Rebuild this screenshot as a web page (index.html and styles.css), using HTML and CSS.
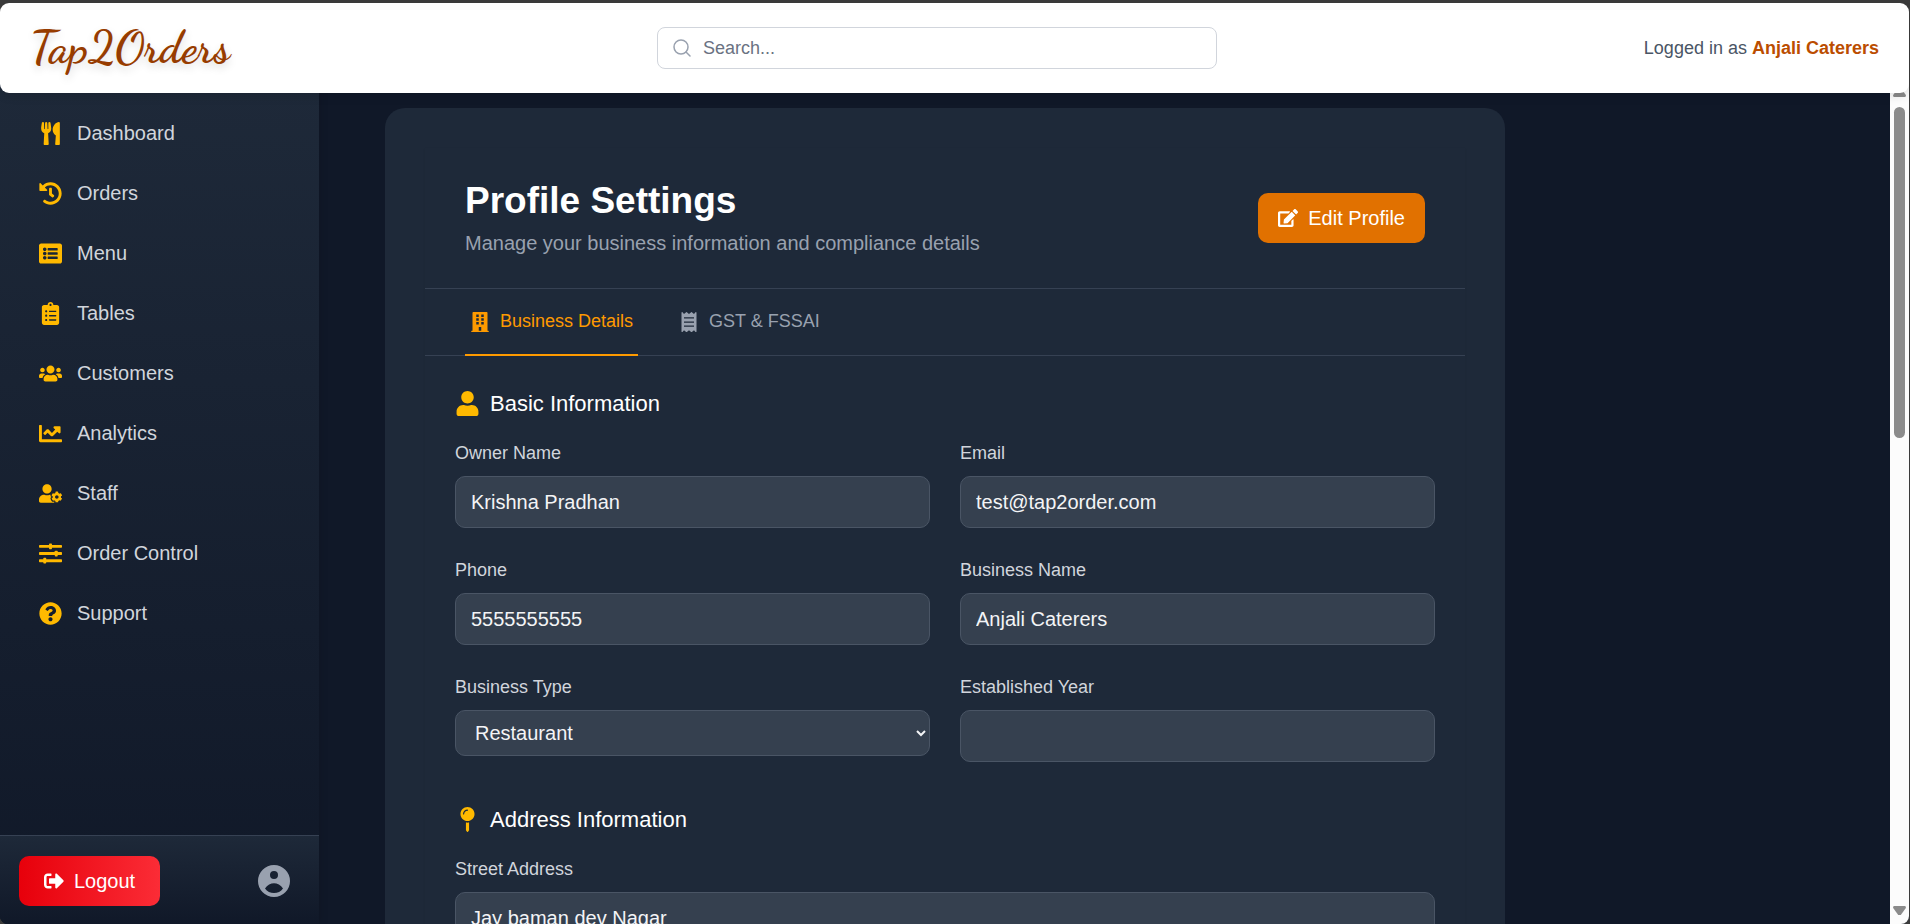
FILE: index.html
```html
<!DOCTYPE html>
<html lang="en">
<head>
    <meta charset="UTF-8">
    <meta name="viewport" content="width=device-width, initial-scale=1.0">
    <title>Tap2Orders - Profile Settings</title>
    <link rel="stylesheet" href="styles.css">
</head>
<body>
    <div class="app">
        <header class="topbar">
            <a href="#" class="logo">Tap2Orders</a>
            <label class="search">
                <svg class="search-icon" viewBox="0 0 18 18"><circle cx="8" cy="8" r="7"/><path d="M13 13l4 4"/></svg>
                <input type="search" placeholder="Search..." aria-label="Search">
            </label>
            <div class="logged-in">Logged in as <strong>Anjali Caterers</strong></div>
        </header>

        <div class="shell">
            <aside class="sidebar">
                <nav class="nav">
                    <a href="#" class="nav-item">
                        <svg class="nav-icon" viewBox="0 0 416 512"><path d="M207.9 15.2c.8 4.7 16.1 94.5 16.1 128.8 0 52.3-27.8 89.6-68.9 104.6L168 486.7c.7 13.7-10.2 25.3-24 25.3H80c-13.7 0-24.7-11.5-24-25.3l12.9-238.1C27.7 233.6 0 196.2 0 144 0 109.6 15.3 19.9 16.1 15.2 19.3-5.1 61.4-5.4 64 16.3v141.2c1.3 3.4 15.1 3.2 16 0 1.4-25.3 7.9-139.2 8-141.8 3.3-20.8 44.7-20.8 47.9 0 .2 2.7 6.6 116.5 8 141.8.9 3.2 14.8 3.4 16 0V16.3c2.6-21.6 44.8-21.4 48-1.1zm119.2 285.7l-15 185.1c-1.2 14 9.9 26 23.9 26h56c13.3 0 24-10.7 24-24V24c0-13.2-10.7-24-24-24-82.5 0-221.4 178.5-64.9 300.9z"/></svg>
                        Dashboard
                    </a>
                    <a href="#" class="nav-item">
                        <svg class="nav-icon" viewBox="0 0 512 512"><path d="M504 255.531c.253 136.64-111.18 248.372-247.82 248.468-59.015.042-113.223-20.53-155.822-54.911-11.077-8.94-11.905-25.541-1.839-35.607l11.267-11.267c8.609-8.609 22.353-9.551 31.891-1.984C173.062 425.135 212.781 440 256 440c101.705 0 184-82.311 184-184 0-101.705-82.311-184-184-184-48.814 0-93.149 18.969-126.068 49.932l50.754 50.754c10.08 10.08 2.941 27.314-11.313 27.314H24c-8.837 0-16-7.163-16-16V38.627c0-14.254 17.234-21.393 27.314-11.314l49.372 49.372C129.209 34.136 189.552 8 256 8c136.81 0 247.747 110.78 248 247.531zm-180.912 78.784l9.823-12.63c8.138-10.463 6.253-25.542-4.21-33.679L288 256.349V152c0-13.255-10.745-24-24-24h-16c-13.255 0-24 10.745-24 24v135.651l65.409 50.874c10.463 8.137 25.541 6.253 33.679-4.21z"/></svg>
                        Orders
                    </a>
                    <a href="#" class="nav-item">
                        <svg class="nav-icon" viewBox="0 0 512 512"><path fill-rule="evenodd" d="M464 480H48c-26.51 0-48-21.49-48-48V80c0-26.51 21.49-48 48-48h416c26.51 0 48 21.49 48 48v352c0 26.51-21.49 48-48 48zM128 120c-22.091 0-40 17.909-40 40s17.909 40 40 40 40-17.909 40-40-17.909-40-40-40zm0 96c-22.091 0-40 17.909-40 40s17.909 40 40 40 40-17.909 40-40-17.909-40-40-40zm0 96c-22.091 0-40 17.909-40 40s17.909 40 40 40 40-17.909 40-40-17.909-40-40-40zm288-136v-32c0-6.627-5.373-12-12-12H204c-6.627 0-12 5.373-12 12v32c0 6.627 5.373 12 12 12h200c6.627 0 12-5.373 12-12zm0 96v-32c0-6.627-5.373-12-12-12H204c-6.627 0-12 5.373-12 12v32c0 6.627 5.373 12 12 12h200c6.627 0 12-5.373 12-12zm0 96v-32c0-6.627-5.373-12-12-12H204c-6.627 0-12 5.373-12 12v32c0 6.627 5.373 12 12 12h200c6.627 0 12-5.373 12-12z"/></svg>
                        Menu
                    </a>
                    <a href="#" class="nav-item">
                        <svg class="nav-icon" viewBox="0 0 384 512"><path fill-rule="evenodd" d="M336 64h-80c0-35.3-28.7-64-64-64s-64 28.7-64 64H48C21.5 64 0 85.5 0 112v352c0 26.5 21.5 48 48 48h288c26.5 0 48-21.5 48-48V112c0-26.5-21.5-48-48-48zM96 424c-13.3 0-24-10.7-24-24s10.7-24 24-24 24 10.7 24 24-10.7 24-24 24zm0-96c-13.3 0-24-10.7-24-24s10.7-24 24-24 24 10.7 24 24-10.7 24-24 24zm0-96c-13.3 0-24-10.7-24-24s10.7-24 24-24 24 10.7 24 24-10.7 24-24 24zm96-192c13.3 0 24 10.7 24 24s-10.7 24-24 24-24-10.7-24-24 10.7-24 24-24zm128 368c0 4.4-3.6 8-8 8H168c-4.4 0-8-3.6-8-8v-16c0-4.4 3.6-8 8-8h144c4.4 0 8 3.6 8 8v16zm0-96c0 4.4-3.6 8-8 8H168c-4.4 0-8-3.6-8-8v-16c0-4.4 3.6-8 8-8h144c4.4 0 8 3.6 8 8v16zm0-96c0 4.4-3.6 8-8 8H168c-4.4 0-8-3.6-8-8v-16c0-4.4 3.6-8 8-8h144c4.4 0 8 3.6 8 8v16z"/></svg>
                        Tables
                    </a>
                    <a href="#" class="nav-item">
                        <svg class="nav-icon" viewBox="0 0 640 512"><path d="M96 224c35.3 0 64-28.7 64-64s-28.7-64-64-64-64 28.7-64 64 28.7 64 64 64zm448 0c35.3 0 64-28.7 64-64s-28.7-64-64-64-64 28.7-64 64 28.7 64 64 64zm32 32h-64c-17.6 0-33.5 7.1-45.1 18.6 40.3 22.1 68.9 62 75.1 109.4h66c17.7 0 32-14.3 32-32v-32c0-35.3-28.7-64-64-64zm-256 0c61.9 0 112-50.1 112-112S381.9 32 320 32 208 82.1 208 144s50.1 112 112 112zm76.8 32h-8.3c-20.8 10-43.9 16-68.5 16s-47.6-6-68.5-16h-8.3C179.6 288 128 339.6 128 403.2V432c0 26.5 21.5 48 48 48h288c26.5 0 48-21.5 48-48v-28.8c0-63.6-51.6-115.2-115.2-115.2zm-223.7-13.4C161.5 263.1 145.6 256 128 256H64c-35.3 0-64 28.7-64 64v32c0 17.7 14.3 32 32 32h65.9c6.3-47.4 34.9-87.3 75.2-109.4z"/></svg>
                        Customers
                    </a>
                    <a href="#" class="nav-item">
                        <svg class="nav-icon" viewBox="0 0 512 512"><path d="M496 384H64V80c0-8.84-7.16-16-16-16H16C7.16 64 0 71.16 0 80v336c0 17.67 14.33 32 32 32h464c8.84 0 16-7.16 16-16v-32c0-8.84-7.16-16-16-16zM464 96H345.94c-21.38 0-32.09 25.85-16.97 40.97l32.4 32.4L288 242.75l-73.37-73.37c-12.5-12.5-32.76-12.5-45.25 0l-68.69 68.69c-6.25 6.25-6.25 16.38 0 22.63l22.62 22.62c6.25 6.25 16.38 6.25 22.63 0L192 237.25l73.37 73.37c12.5 12.5 32.76 12.5 45.25 0l96-96 32.4 32.4c15.12 15.12 40.97 4.41 40.97-16.97V112c.01-8.84-7.15-16-15.99-16z"/></svg>
                        Analytics
                    </a>
                    <a href="#" class="nav-item">
                        <svg class="nav-icon" viewBox="0 0 640 512"><path d="M610.5 373.3c2.6-14.1 2.6-28.5 0-42.6l25.8-14.9c3-1.7 4.3-5.2 3.3-8.5-6.7-21.6-18.2-41.2-33.2-57.4-2.3-2.5-6-3.1-9-1.4l-25.8 14.9c-10.9-9.3-23.4-16.5-36.9-21.3v-29.8c0-3.4-2.4-6.4-5.7-7.1-22.3-5-45-4.8-66.2 0-3.3.7-5.7 3.7-5.7 7.1v29.8c-13.5 4.8-26 12-36.9 21.3l-25.8-14.9c-2.9-1.7-6.7-1.1-9 1.4-15 16.2-26.5 35.8-33.2 57.4-1 3.3.4 6.8 3.3 8.5l25.8 14.9c-2.6 14.1-2.6 28.5 0 42.6l-25.8 14.9c-3 1.7-4.3 5.2-3.3 8.5 6.7 21.6 18.2 41.1 33.2 57.4 2.3 2.5 6 3.1 9 1.4l25.8-14.9c10.9 9.3 23.4 16.5 36.9 21.3v29.8c0 3.4 2.4 6.4 5.7 7.1 22.3 5 45 4.8 66.2 0 3.3-.7 5.7-3.7 5.7-7.1v-29.8c13.5-4.8 26-12 36.9-21.3l25.8 14.9c2.9 1.7 6.7 1.1 9-1.4 15-16.2 26.5-35.8 33.2-57.4 1-3.3-.4-6.8-3.3-8.5l-25.8-14.9zM496 400.5c-26.8 0-48.5-21.8-48.5-48.5s21.8-48.5 48.5-48.5 48.5 21.8 48.5 48.5-21.7 48.5-48.5 48.5zM224 256c70.7 0 128-57.3 128-128S294.7 0 224 0 96 57.3 96 128s57.3 128 128 128zm201.2 226.5c-2.3-1.2-4.6-2.6-6.8-3.9l-7.9 4.6c-6 3.4-12.8 5.3-19.6 5.3-10.9 0-21.4-4.6-28.9-12.6-18.3-19.8-32.3-43.9-40.2-69.6-5.5-17.7 1.9-36.4 17.9-45.7l7.9-4.6c-.1-2.6-.1-5.2 0-7.8l-7.9-4.6c-16-9.2-23.4-28-17.9-45.7.9-2.9 2.2-5.8 3.2-8.7-3.8-.3-7.5-1.2-11.4-1.2h-16.7c-22.2 10.2-46.9 16-72.9 16s-50.6-5.8-72.9-16h-16.7C60.2 288 0 348.2 0 422.4V464c0 26.5 21.5 48 48 48h352c10.1 0 19.5-3.2 27.2-8.5-1.2-3.8-2-7.7-2-11.8v-9.2z"/></svg>
                        Staff
                    </a>
                    <a href="#" class="nav-item">
                        <svg class="nav-icon" viewBox="0 0 512 512">
                            <rect x="0" y="64" width="512" height="64" rx="16"/>
                            <rect x="0" y="224" width="512" height="64" rx="16"/>
                            <rect x="0" y="384" width="512" height="64" rx="16"/>
                            <rect x="224" y="32" width="64" height="128" rx="16"/>
                            <rect x="352" y="192" width="64" height="128" rx="16"/>
                            <rect x="96" y="352" width="64" height="128" rx="16"/>
                        </svg>
                        Order Control
                    </a>
                    <a href="#" class="nav-item">
                        <svg class="nav-icon" viewBox="0 0 512 512"><path fill-rule="evenodd" d="M504 256c0 136.997-111.043 248-248 248S8 392.997 8 256C8 119.083 119.043 8 256 8s248 111.083 248 248zM262.655 90c-54.497 0-89.255 22.957-116.549 63.758-3.536 5.286-2.353 12.415 2.715 16.258l34.699 26.31c5.205 3.947 12.621 3.008 16.665-2.122 17.864-22.658 30.113-35.797 57.303-35.797 20.429 0 45.698 13.148 45.698 32.958 0 14.976-12.363 22.667-32.534 33.976C247.128 238.528 216 254.941 216 296v4c0 6.627 5.373 12 12 12h56c6.627 0 12-5.373 12-12v-1.333c0-28.462 83.186-29.647 83.186-106.667 0-58.002-60.165-102-116.531-102zM256 338c-25.365 0-46 20.635-46 46 0 25.364 20.635 46 46 46s46-20.636 46-46c0-25.365-20.635-46-46-46z"/></svg>
                        Support
                    </a>
                </nav>
                <div class="sidebar-footer">
                    <button type="button" class="btn btn-logout">
                        <svg class="btn-icon" viewBox="0 0 512 512"><path d="M497 273L329 441c-15 15-41 4.5-41-17v-96H152c-13.3 0-24-10.7-24-24v-96c0-13.3 10.7-24 24-24h136V88c0-21.4 25.9-32 41-17l168 168c9.3 9.4 9.3 24.6 0 34zM192 436v-40c0-6.6-5.4-12-12-12H96c-17.7 0-32-14.3-32-32V160c0-17.7 14.3-32 32-32h84c6.6 0 12-5.4 12-12V76c0-6.6-5.4-12-12-12H96c-53 0-96 43-96 96v192c0 53 43 96 96 96h84c6.6 0 12-5.4 12-12z"/></svg>
                        Logout
                    </button>
                    <button type="button" class="avatar" aria-label="Account">
                        <svg viewBox="0 0 32 32"><path fill-rule="evenodd" d="M16 0a16 16 0 1 0 0 32 16 16 0 0 0 0-32zM16 6a4 4 0 1 1 0 8 4 4 0 0 1 0-8zM7 23.500C9 20 13 18.200 16 18.200s7 1.800 9 5.300C23 26.500 19.500 28 16 28s-7-1.500-9-4.500z"/></svg>
                    </button>
                </div>
            </aside>

            <main class="main">
                <div class="card">
                    <div class="panel">
                        <div class="panel-header">
                            <div>
                                <h1>Profile Settings</h1>
                                <p>Manage your business information and compliance details</p>
                            </div>
                            <button type="button" class="btn btn-edit">
                                <svg class="btn-icon" viewBox="0 0 576 512"><path d="M402.6 83.2l90.2 90.2c3.8 3.8 3.8 10 0 13.800L274.400 405.600l-92.800 10.300c-12.400 1.400-22.900-9.100-21.500-21.500l10.300-92.800L388.800 83.200c3.800-3.800 10-3.800 13.800 0zm162-22.900l-48.800-48.800c-15.200-15.200-39.900-15.200-55.200 0l-35.400 35.400c-3.800 3.800-3.800 10 0 13.800l90.200 90.200c3.800 3.800 10 3.800 13.800 0l35.400-35.400c15.200-15.300 15.200-40 0-55.200zM384 346.200V448H64V128h229.800c3.200 0 6.200-1.300 8.500-3.500l40-40c7.600-7.600 2.200-20.500-8.500-20.500H48C21.500 64 0 85.500 0 112v352c0 26.500 21.500 48 48 48h352c26.500 0 48-21.500 48-48V306.200c0-10.700-12.900-16-20.500-8.500l-40 40c-2.200 2.300-3.500 5.300-3.500 8.500z"/></svg>
                                Edit Profile
                            </button>
                        </div>

                        <div class="tabs" role="tablist">
                            <button type="button" class="tab active" role="tab" aria-selected="true">
                                <svg class="tab-icon" viewBox="0 0 448 512"><path fill-rule="evenodd" d="M436 480h-20V24c0-13.300-10.700-24-24-24H56C42.700 0 32 10.700 32 24v456H12c-6.600 0-12 5.400-12 12v20h448v-20c0-6.600-5.400-12-12-12zM128 64h64v64h-64zM256 64h64v64h-64zM128 160h64v64h-64zM256 160h64v64h-64zM128 256h64v64h-64zM256 256h64v64h-64zM192 384h64v96h-64z"/></svg>
                                Business Details
                            </button>
                            <button type="button" class="tab" role="tab" aria-selected="false">
                                <svg class="tab-icon" viewBox="0 0 384 512"><path fill-rule="evenodd" d="M358.400 3.200L320 48 265.600 3.200a15.900 15.900 0 0 0-19.200 0L192 48 137.600 3.200a15.900 15.900 0 0 0-19.200 0L64 48 25.600 3.200C15-4.700 0 2.800 0 16v480c0 13.200 15 20.700 25.600 12.800L64 464l54.400 44.800a15.900 15.900 0 0 0 19.200 0L192 464l54.400 44.800a15.900 15.900 0 0 0 19.200 0L320 464l38.400 44.800c10.500 7.900 25.600.4 25.600-12.800V16c0-13.200-15-20.700-25.600-12.800zM64 136h256v32H64zM64 240h256v32H64zM64 344h256v32H64z"/></svg>
                                GST &amp; FSSAI
                            </button>
                        </div>

                        <form class="sections">
                            <section>
                                <h2>
                                    <svg class="section-icon" viewBox="0 0 448 512"><path d="M224 256c70.700 0 128-57.300 128-128S294.700 0 224 0 96 57.300 96 128s57.300 128 128 128zm89.600 32h-16.700c-22.200 10.200-46.900 16-72.900 16s-50.600-5.800-72.900-16h-16.700C60.200 288 0 348.200 0 422.400V464c0 26.500 21.500 48 48 48h352c26.500 0 48-21.500 48-48v-41.600c0-74.200-60.200-134.400-134.400-134.400z"/></svg>
                                    Basic Information
                                </h2>
                                <div class="fields">
                                    <div class="field">
                                        <label for="owner">Owner Name</label>
                                        <input id="owner" type="text" value="Krishna Pradhan">
                                    </div>
                                    <div class="field">
                                        <label for="email">Email</label>
                                        <input id="email" type="email" value="test@tap2order.com">
                                    </div>
                                    <div class="field">
                                        <label for="phone">Phone</label>
                                        <input id="phone" type="tel" value="5555555555">
                                    </div>
                                    <div class="field">
                                        <label for="business">Business Name</label>
                                        <input id="business" type="text" value="Anjali Caterers">
                                    </div>
                                    <div class="field">
                                        <label for="type">Business Type</label>
                                        <select id="type">
                                            <option>Restaurant</option>
                                        </select>
                                    </div>
                                    <div class="field">
                                        <label for="year">Established Year</label>
                                        <input id="year" type="text">
                                    </div>
                                </div>
                            </section>

                            <section>
                                <h2>
                                    <svg class="section-icon" viewBox="0 0 288 512"><path fill-rule="evenodd" d="M112 316.940v156.690l22.020 33.020c4.750 7.120 15.220 7.120 19.970 0L176 473.630V316.940c-10.390 1.920-21.060 3.060-32 3.060s-21.610-1.140-32-3.060zM144 0C64.470 0 0 64.470 0 144s64.470 144 144 144 144-64.470 144-144S223.530 0 144 0zm0 76c-37.500 0-68 30.500-68 68 0 6.620-5.380 12-12 12s-12-5.380-12-12c0-50.730 41.280-92 92-92 6.620 0 12 5.380 12 12s-5.380 12-12 12z"/></svg>
                                    Address Information
                                </h2>
                                <div class="fields">
                                    <div class="field wide">
                                        <label for="street">Street Address</label>
                                        <input id="street" type="text" value="Jay baman dev Nagar">
                                    </div>
                                </div>
                            </section>
                        </form>
                    </div>
                </div>
            </main>

            <div class="scrollbar" aria-hidden="true">
                <span class="arrow arrow-up"></span>
                <span class="track"><span class="thumb"></span></span>
                <span class="arrow arrow-down"></span>
            </div>
        </div>
    </div>
</body>
</html>
```
FILE: styles.css
```css
* {
    box-sizing: border-box;
}
body {
    margin: 0;
    font-family: Arial, "Liberation Sans", sans-serif;
    font-size: 20px;
    line-height: 30px;
    background: #3b3b3b;
    overflow: hidden;
}
button, input, select {
    font: inherit;
}
h1, h2, p {
    margin: 0;
}
a {
    text-decoration: none;
}
svg {
    display: block;
    flex-shrink: 0;
    fill: currentColor;
}

.app {
    display: flex;
    flex-direction: column;
    height: 100vh;
    padding: 3px 1px 0 0;
}

/* Top bar */
.topbar {
    position: relative;
    z-index: 2;
    display: flex;
    align-items: center;
    justify-content: space-between;
    flex-shrink: 0;
    height: 90px;
    padding: 0 30px;
    background: white;
    border-radius: 9px;
    box-shadow: 0 4px 8px rgba(0, 0, 0, 0.1);
}
.logo {
    font-family: "Dancing Script", "Liberation Serif", cursive;
    font-size: 45px;
    font-weight: bold;
    line-height: 60px;
    color: #973c00;
    text-shadow: 0 4px 8px rgba(0, 0, 0, 0.15);
}
.search {
    display: flex;
    align-items: center;
    gap: 12px;
    width: 560px;
    height: 42px;
    padding: 0 15px;
    border: 1px solid #d1d5dc;
    border-radius: 8px;
}
.search-icon {
    width: 18px;
    fill: none;
    stroke: #99a1af;
    stroke-width: 1.5;
    stroke-linecap: round;
}
.search input {
    flex: 1;
    min-width: 0;
    padding: 0;
    border: none;
    outline: none;
    background: none;
    font-size: 18px;
}
.search input::placeholder {
    color: #6a7282;
}
.logged-in {
    font-size: 18px;
    color: #4a5565;
}
.logged-in strong {
    color: #bb4d00;
}

/* The body slides under the rounded corners of the top bar */
.shell {
    display: flex;
    flex: 1;
    min-height: 0;
    margin-top: -10px;
    background: #101828;
    border-radius: 0 0 8px 8px;
    overflow: hidden;
}

/* Sidebar */
.sidebar {
    display: flex;
    flex-direction: column;
    flex-shrink: 0;
    width: 319px;
    background: linear-gradient(#1e2939, #101828);
    box-shadow: 2px 0 8px rgba(0, 0, 0, 0.1);
}
.nav {
    display: flex;
    flex-direction: column;
    flex: 1;
    gap: 10px;
    padding: 25px 19px;
}
.nav-item {
    display: flex;
    align-items: center;
    gap: 15px;
    padding: 10px 20px;
    color: #d1d5dc;
}
.nav-icon {
    width: 23px;
    height: 23px;
    color: #ffb900;
}
.sidebar-footer {
    display: flex;
    align-items: center;
    justify-content: space-between;
    padding: 20px 19px 18px;
    border-top: 1px solid #364153;
    background: linear-gradient(#1e2939, #101828);
}
.btn {
    display: flex;
    align-items: center;
    gap: 10px;
    padding: 10px 20px;
    border: none;
    border-radius: 10px;
    color: white;
    cursor: pointer;
}
.btn-icon {
    width: 20px;
    height: 20px;
}
.btn-logout {
    padding: 10px 25px;
    background: linear-gradient(90deg, #e7000b, #fb2c36);
}
.btn-edit {
    background: #e17100;
}
.avatar {
    padding: 0 10px;
    border: none;
    background: none;
    color: #99a1af;
    cursor: pointer;
}
.avatar svg {
    width: 32px;
    height: 32px;
}

/* Content */
.main {
    flex: 1;
    min-width: 0;
    padding: 25px 66px 0;
    overflow: hidden;
}
.card {
    max-width: 1120px;
    padding: 40px;
    background: #1e2939;
    border-radius: 20px;
}
.panel {
    box-shadow: 0 1px 2px rgba(0, 0, 0, 0.08);
}
.panel-header {
    display: flex;
    align-items: center;
    justify-content: space-between;
    padding: 30px 40px;
    border-bottom: 1px solid #364153;
}
.panel-header h1 {
    margin-bottom: 5px;
    font-size: 37px;
    line-height: 45px;
    color: white;
}
.panel-header p {
    color: #99a1af;
}

.tabs {
    display: flex;
    gap: 36px;
    padding: 0 40px;
    border-bottom: 1px solid #364153;
}
.tab {
    display: flex;
    align-items: center;
    gap: 10px;
    margin-bottom: -1px;
    padding: 20px 5px;
    border: none;
    border-bottom: 2px solid transparent;
    background: none;
    font-size: 18px;
    line-height: 25px;
    color: #99a1af;
    cursor: pointer;
}
.tab.active {
    color: #fe9a00;
    border-bottom-color: #fe9a00;
}
.tab-icon {
    width: 20px;
    height: 20px;
}

.sections {
    display: flex;
    flex-direction: column;
    gap: 40px;
    padding: 30px;
}
h2 {
    display: flex;
    align-items: center;
    gap: 10px;
    margin-bottom: 20px;
    font-size: 22px;
    line-height: 35px;
    font-weight: normal;
    color: white;
}
.section-icon {
    width: 25px;
    height: 25px;
    color: #ffb900;
}
.fields {
    display: grid;
    grid-template-columns: 1fr 1fr;
    gap: 30px;
}
.field {
    display: flex;
    flex-direction: column;
    gap: 10px;
}
.field.wide {
    grid-column: 1 / -1;
}
.field label {
    font-size: 18px;
    line-height: 25px;
    color: #d1d5dc;
}
.field input, .field select {
    width: 100%;
    height: 52px;
    padding: 10px 15px;
    border: 1px solid #4a5565;
    border-radius: 10px;
    background: #35404f;
    color: #f3f4f6;
}
.field select {
    height: 46px;
    padding: 0 15px;
}

/* Scrollbar */
.scrollbar {
    display: flex;
    flex-direction: column;
    align-items: center;
    flex-shrink: 0;
    width: 19px;
    padding: 5px 0 9px;
    background: #fcfcfc;
}
.arrow {
    width: 13px;
    height: 9px;
    background: #8b8b8b;
}
.arrow-up {
    clip-path: polygon(40% 0, 60% 0, 100% 80%, 95% 100%, 5% 100%, 0 80%);
}
.arrow-down {
    clip-path: polygon(5% 0, 95% 0, 100% 20%, 60% 100%, 40% 100%, 0 20%);
}
.track {
    flex: 1;
    padding: 10px 0;
}
.thumb {
    display: block;
    width: 11px;
    height: 42%;
    border-radius: 6px;
    background: #8b8b8b;
}
```
